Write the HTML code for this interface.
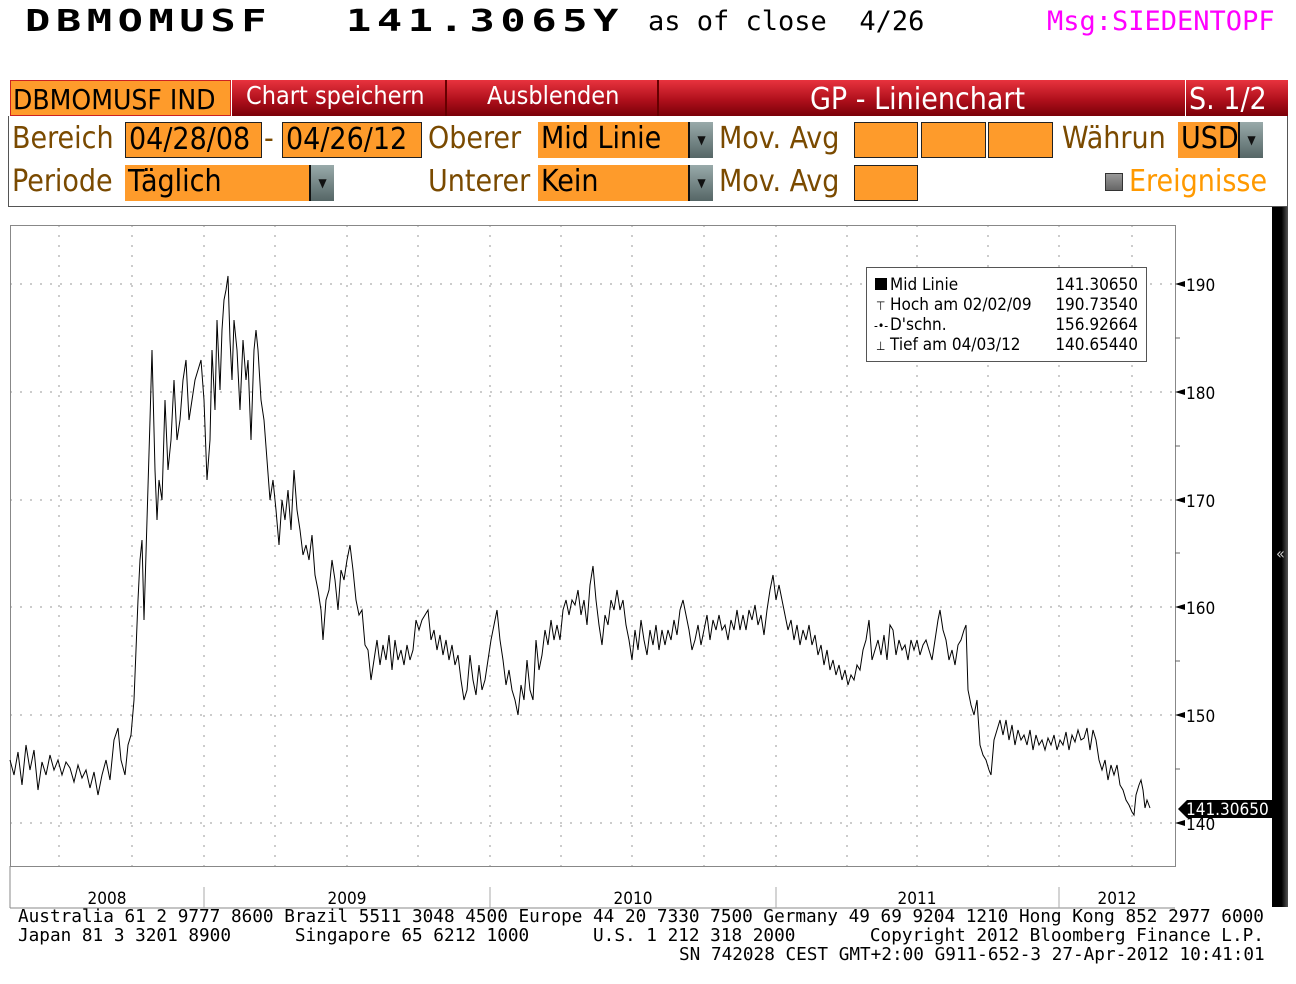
<!DOCTYPE html>
<html><head><meta charset="utf-8"><style>
body{margin:0;width:1296px;height:984px;background:#fff;position:relative;overflow:hidden;font-family:"DejaVu Sans Condensed","DejaVu Sans",sans-serif}
.a{position:absolute;white-space:pre}
.t{font-family:"DejaVu Sans Mono","Liberation Mono",monospace}
.big{font-size:30px;font-weight:bold;transform:scaleX(1.4);transform-origin:0 0;letter-spacing:4px}
.red{background:linear-gradient(#e8333e,#b0101c 55%,#7a0008)}
.o{background:#fe9b2b;border:1px solid #222;box-sizing:border-box}
.lb{color:#7a4a00;font-size:30px}
.v{color:#000;font-size:30px;line-height:34px;padding-left:3px}
.dd{width:25px;height:36px;background:linear-gradient(#9aa,#566);border-left:2px solid #111;box-sizing:border-box;color:#111;font-size:12px;text-align:center;line-height:36px}
.f{font-family:"DejaVu Sans Mono",monospace;font-size:17.7px;color:#000}
</style></head><body>
<div class="a t big" style="left:25px;top:4px">DBMOMUSF</div>
<div class="a t big" style="left:346px;top:4px">141.3065Y</div>
<div class="a t" style="left:648px;top:6px;font-size:27px">as of close  4/26</div>
<div class="a t" style="left:1047px;top:6px;font-size:27px;color:#f0f">Msg:SIEDENTOPF</div>

<div class="a red" style="left:232px;top:80px;width:1056px;height:36px"></div>
<div class="a o" style="left:10px;top:80px;width:221px;height:36px;font-size:28px;line-height:38px;padding-left:2px;border-color:#c22">DBMOMUSF IND</div>
<div class="a" style="left:445px;top:80px;width:2px;height:36px;background:#600"></div>
<div class="a" style="left:657px;top:80px;width:2px;height:36px;background:#600"></div>
<div class="a" style="left:1185px;top:80px;width:1px;height:36px;background:#fff"></div>
<div class="a" style="left:246px;top:81px;color:#fff;font-size:25px">Chart speichern</div>
<div class="a" style="left:487px;top:81px;color:#fff;font-size:25px">Ausblenden</div>
<div class="a" style="left:810px;top:82px;color:#fff;font-size:30px">GP - Linienchart</div>
<div class="a" style="left:1189px;top:82px;color:#fff;font-size:30px">S. 1/2</div>

<div class="a" style="left:8px;top:116px;width:1278px;height:90px;border:1px solid #555;border-top:none"></div>
<div class="a lb" style="left:12px;top:121px">Bereich</div>
<div class="a o v" style="left:125px;top:122px;width:137px;height:36px">04/28/08</div>
<div class="a lb" style="left:264px;top:121px">-</div>
<div class="a o v" style="left:282px;top:122px;width:140px;height:36px">04/26/12</div>
<div class="a lb" style="left:428px;top:121px">Oberer</div>
<div class="a o v" style="left:538px;top:122px;width:150px;height:36px;border:none">Mid Linie</div>
<div class="a dd" style="left:688px;top:122px">▼</div>
<div class="a lb" style="left:719px;top:121px">Mov. Avg</div>
<div class="a o" style="left:854px;top:122px;width:64px;height:36px"></div>
<div class="a o" style="left:921px;top:122px;width:65px;height:36px"></div>
<div class="a o" style="left:988px;top:122px;width:65px;height:36px"></div>
<div class="a lb" style="left:1062px;top:121px">Währun</div>
<div class="a o v" style="left:1178px;top:122px;width:60px;height:36px;border:none">USD</div>
<div class="a dd" style="left:1238px;top:122px">▼</div>

<div class="a lb" style="left:12px;top:164px">Periode</div>
<div class="a o v" style="left:125px;top:165px;width:184px;height:36px;border:none">Täglich</div>
<div class="a dd" style="left:309px;top:165px">▼</div>
<div class="a lb" style="left:428px;top:164px">Unterer</div>
<div class="a o v" style="left:538px;top:165px;width:150px;height:36px;border:none">Kein</div>
<div class="a dd" style="left:688px;top:165px">▼</div>
<div class="a lb" style="left:719px;top:164px">Mov. Avg</div>
<div class="a o" style="left:854px;top:165px;width:64px;height:36px"></div>
<div class="a" style="left:1105px;top:173px;width:18px;height:18px;background:linear-gradient(#999,#666);border:1px solid #333;box-sizing:border-box"></div>
<div class="a" style="left:1129px;top:164px;font-size:30px;color:#f90">Ereignisse</div>

<div class="a" style="left:1272px;top:207px;width:16px;height:700px;background:linear-gradient(90deg,#000 60%,#555)"></div>
<div class="a" style="left:1276px;top:544px;color:#ccc;font-size:16px">«</div>

<svg class="a" style="left:0;top:0" width="1296" height="984">
<g stroke="#999" stroke-dasharray="2,8" stroke-width="1">
<line x1="10" y1="284" x2="1175" y2="284"/><line x1="10" y1="392" x2="1175" y2="392"/><line x1="10" y1="500" x2="1175" y2="500"/><line x1="10" y1="607" x2="1175" y2="607"/><line x1="10" y1="715" x2="1175" y2="715"/><line x1="10" y1="823" x2="1175" y2="823"/>
<line x1="59" y1="225" x2="59" y2="866"/><line x1="132" y1="225" x2="132" y2="866"/><line x1="204" y1="225" x2="204" y2="866"/><line x1="275" y1="225" x2="275" y2="866"/><line x1="347" y1="225" x2="347" y2="866"/><line x1="418" y1="225" x2="418" y2="866"/><line x1="490" y1="225" x2="490" y2="866"/><line x1="561" y1="225" x2="561" y2="866"/><line x1="632" y1="225" x2="632" y2="866"/><line x1="704" y1="225" x2="704" y2="866"/><line x1="776" y1="225" x2="776" y2="866"/><line x1="847" y1="225" x2="847" y2="866"/><line x1="917" y1="225" x2="917" y2="866"/><line x1="988" y1="225" x2="988" y2="866"/><line x1="1059" y1="225" x2="1059" y2="866"/><line x1="1132" y1="225" x2="1132" y2="866"/>
</g>
<rect x="10.5" y="225.5" width="1165" height="641" fill="none" stroke="#888"/>
<line x1="10" y1="908" x2="1175" y2="908" stroke="#888"/>
<line x1="10" y1="866" x2="10" y2="908" stroke="#888"/>
<g stroke="#aaa"><line x1="204" y1="887" x2="204" y2="908"/><line x1="490" y1="887" x2="490" y2="908"/><line x1="776" y1="887" x2="776" y2="908"/><line x1="1059" y1="887" x2="1059" y2="908"/></g>
<g stroke="#666"><line x1="1175" y1="338" x2="1180" y2="338"/><line x1="1175" y1="446" x2="1180" y2="446"/><line x1="1175" y1="553" x2="1180" y2="553"/><line x1="1175" y1="661" x2="1180" y2="661"/><line x1="1175" y1="769" x2="1180" y2="769"/></g>
<g fill="#000"><path d="M1175 284l10-3v6z"/><path d="M1175 392l10-3v6z"/><path d="M1175 500l10-3v6z"/><path d="M1175 607l10-3v6z"/><path d="M1175 715l10-3v6z"/><path d="M1175 823l10-3v6z"/></g>
<g font-family="DejaVu Sans Condensed,DejaVu Sans,sans-serif" font-size="17" fill="#000">
<text x="1186" y="291">190</text><text x="1186" y="399">180</text><text x="1186" y="507">170</text><text x="1186" y="614">160</text><text x="1186" y="722">150</text><text x="1186" y="830">140</text>
<text x="107" y="904" text-anchor="middle">2008</text><text x="347" y="904" text-anchor="middle">2009</text><text x="633" y="904" text-anchor="middle">2010</text><text x="917" y="904" text-anchor="middle">2011</text><text x="1117" y="904" text-anchor="middle">2012</text>
</g>
<path d="M1178 809l9-9h85v18h-85z" fill="#000"/>
<text x="1186" y="815" font-family="DejaVu Sans Condensed,sans-serif" font-size="17" fill="#fff">141.30650</text>
<polyline fill="none" stroke="#000" stroke-width="1" points="10,760 14,775 18,752 22,785 26,745 30,770 34,750 38,790 42,762 46,775 50,755 54,770 58,760 62,775 66,762 70,768 74,782 78,765 82,778 86,770 90,788 94,772 98,795 102,775 106,760 110,780 114,740 118,728 121,760 125,775 128,745 131,735 134,700 136,650 138,600 140,560 142,540 144,620 147,520 150,420 152,350 155,470 157,520 159,480 162,500 165,400 168,470 171,440 174,380 177,440 180,420 183,380 186,360 189,420 192,400 195,380 198,370 201,360 204,400 207,480 210,440 212,350 215,410 217,320 220,390 222,330 224,300 226,290 228,276 230,340 232,380 234,320 237,350 240,410 243,340 246,380 248,360 251,440 254,350 256,330 258,350 261,400 264,420 267,460 270,500 273,480 276,510 279,545 282,500 285,520 288,490 291,530 294,470 297,510 300,530 303,555 306,545 309,560 312,535 315,575 318,590 321,610 323,640 326,600 329,590 332,560 335,580 338,610 341,570 344,580 347,560 350,545 353,570 356,600 359,615 362,610 365,645 368,650 371,680 374,660 377,640 380,665 383,645 386,660 389,635 392,670 395,640 398,660 401,650 404,665 407,645 410,660 413,650 416,620 419,630 422,620 425,615 428,610 431,640 434,630 437,650 440,635 443,655 446,640 449,660 452,645 455,665 458,655 461,680 464,700 467,690 470,655 473,680 476,695 479,665 482,690 485,680 488,660 491,640 494,625 497,610 500,640 503,660 506,685 509,670 512,690 515,700 518,715 521,685 524,700 527,660 530,690 533,700 536,640 539,670 542,655 545,630 548,645 551,620 554,640 557,625 560,640 563,610 566,600 569,615 572,600 575,605 578,590 581,615 584,600 587,625 590,585 593,566 596,600 599,625 602,645 605,615 608,625 611,600 614,610 617,590 620,610 623,600 626,625 629,640 632,660 635,630 638,650 641,620 644,640 647,655 650,630 653,645 656,625 659,650 662,630 665,645 668,630 671,640 674,620 677,635 680,610 683,600 686,615 689,630 692,650 695,640 698,625 701,645 704,630 707,615 710,640 713,620 716,630 719,615 722,630 725,625 728,640 731,620 734,630 737,610 740,630 743,615 746,630 749,610 752,620 755,605 758,625 761,615 764,635 767,610 770,590 773,575 776,600 779,585 782,600 785,615 788,630 791,620 794,640 797,625 800,645 803,630 806,640 809,625 812,645 815,635 818,655 821,645 824,665 827,650 830,670 833,660 836,675 839,665 842,680 845,670 848,685 851,675 854,680 857,665 860,670 863,650 866,640 869,620 872,660 875,650 878,640 881,655 884,635 887,660 890,625 893,630 896,655 899,640 902,650 905,645 908,660 911,640 914,650 917,640 920,655 923,645 926,640 929,650 932,660 935,640 938,620 940,610 943,630 946,640 949,660 952,650 955,665 958,645 961,640 964,630 966,625 968,690 971,705 974,715 977,700 980,745 983,755 986,760 989,770 991,775 994,740 997,730 1000,720 1003,735 1006,720 1009,740 1012,725 1015,745 1018,730 1021,740 1024,735 1027,745 1030,730 1033,750 1036,735 1039,745 1042,740 1045,750 1048,738 1051,745 1054,735 1057,750 1060,740 1063,745 1066,732 1069,750 1072,735 1075,742 1078,730 1081,740 1084,738 1087,728 1090,750 1093,730 1096,740 1099,760 1102,770 1105,760 1108,780 1111,765 1114,775 1117,765 1120,785 1123,790 1126,800 1129,805 1132,812 1134,815 1136,795 1139,785 1141,780 1143,790 1145,808 1147,800 1150,808"/>
<rect x="866.5" y="267.5" width="280" height="94" fill="#fff" stroke="#555"/>
<g font-family="DejaVu Sans Condensed,DejaVu Sans,sans-serif" font-size="17" fill="#000">
<rect x="875" y="278" width="12" height="12"/>
<text x="890" y="290">Mid Linie</text><text x="1138" y="290" text-anchor="end">141.30650</text>
<text x="876" y="310" font-size="12">⊤</text><text x="890" y="310">Hoch am 02/02/09</text><text x="1138" y="310" text-anchor="end">190.73540</text>
<text x="874" y="330" font-size="12">-•-</text><text x="890" y="330">D'schn.</text><text x="1138" y="330" text-anchor="end">156.92664</text>
<text x="876" y="350" font-size="12">⊥</text><text x="890" y="350">Tief am 04/03/12</text><text x="1138" y="350" text-anchor="end">140.65440</text>
</g>
</svg>

<div class="a f" style="left:18px;top:907px">Australia 61 2 9777 8600 Brazil 5511 3048 4500 Europe 44 20 7330 7500 Germany 49 69 9204 1210 Hong Kong 852 2977 6000</div>
<div class="a f" style="left:18px;top:926px">Japan 81 3 3201 8900      Singapore 65 6212 1000      U.S. 1 212 318 2000       Copyright 2012 Bloomberg Finance L.P.</div>
<div class="a f" style="left:679px;top:945px">SN 742028 CEST GMT+2:00 G911-652-3 27-Apr-2012 10:41:01</div>
</body></html>
